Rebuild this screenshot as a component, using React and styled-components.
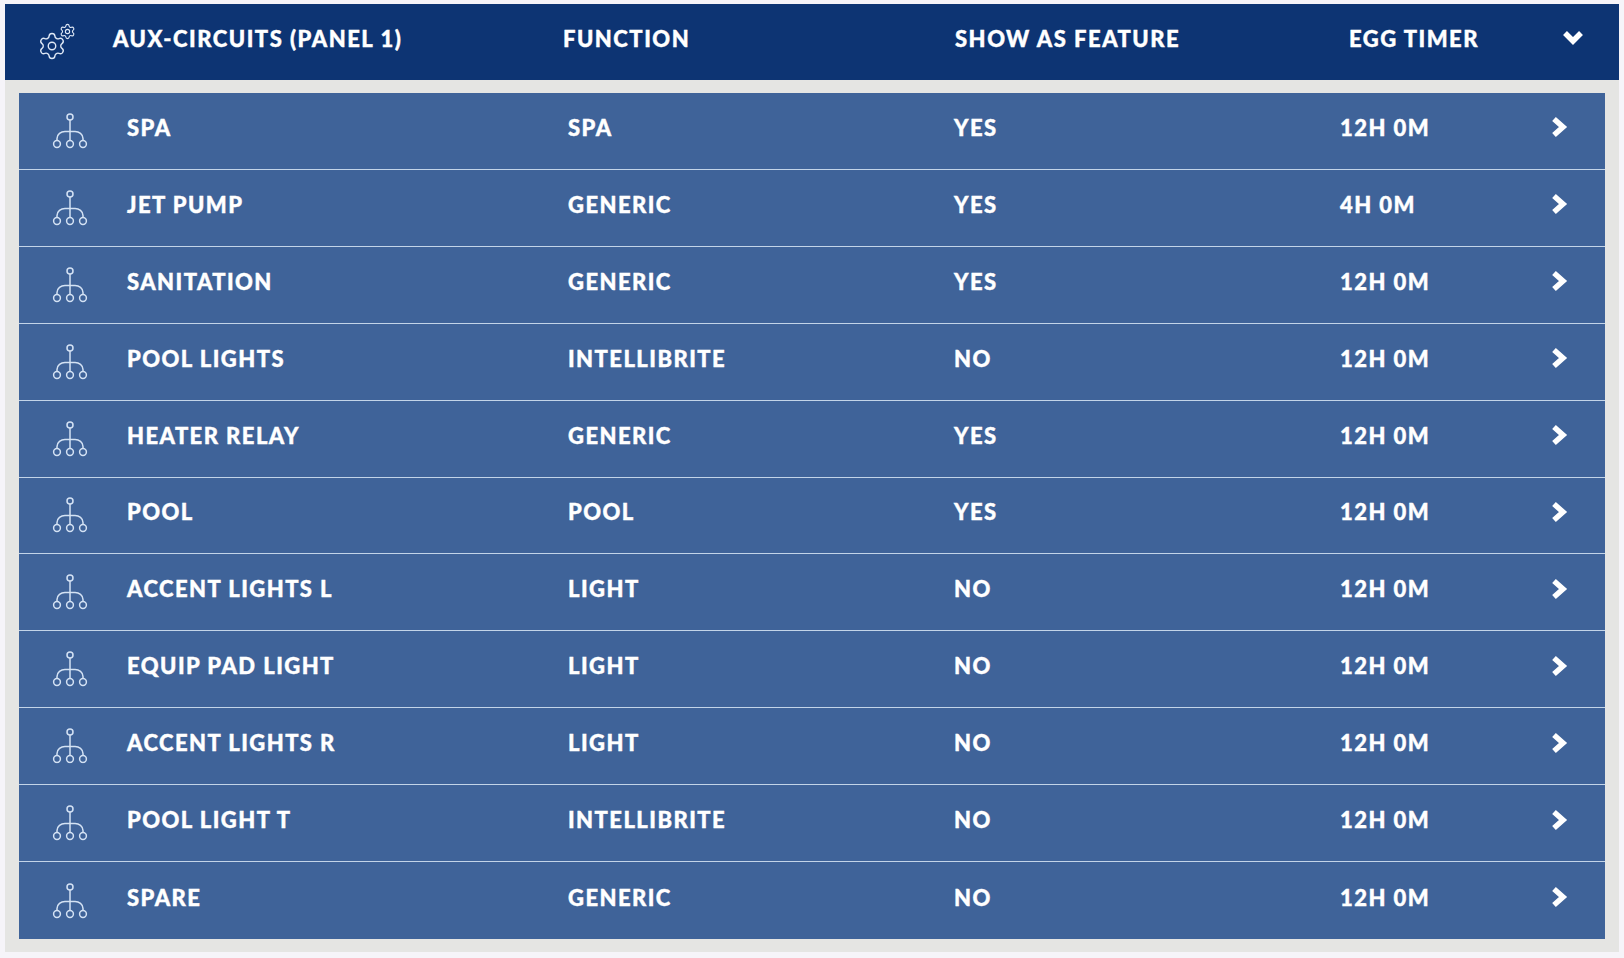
import styled, { createGlobalStyle } from "styled-components";
import { Settings } from "lucide-react";

const GlobalStyle = createGlobalStyle`
  html, body {
    margin: 0;
    padding: 0;
    background: #f6f4f9;
  }
  body {
    font-family: "Lato", "Liberation Sans", sans-serif;
  }
`;

const Page = styled.div`
  width: 1624px;
  height: 958px;
  padding: 4px 5px 6px;
  box-sizing: border-box;
  overflow: hidden;
`;

const Panel = styled.section`
  height: 948px;
  display: flex;
  flex-direction: column;
  background: #e5e5e3;
`;

const Header = styled.header`
  height: 76px;
  flex: none;
  display: grid;
  grid-template-columns: 108px 450px 392px 394px 180px 1fr;
  align-items: center;
  box-sizing: border-box;
  background: #0d3473;
`;

const HeaderCell = styled.div`
  color: #fff;
  font-size: 22px;
  font-weight: 900;
  letter-spacing: 1.5px;
  line-height: 1;
  white-space: nowrap;
  padding-bottom: 6px;
  -webkit-text-stroke: 0.4px #fff;
`;

const GearIcon = styled.div`
  position: relative;
  width: 36px;
  height: 34px;
  margin: 0 0 0 34px;
  color: #dfe8f5;

  svg {
    position: absolute;
  }
  svg:first-child {
    left: -2px;
    bottom: -2px;
  }
  svg:last-child {
    right: -1px;
    top: -2px;
  }
`;

const HeaderChevron = styled.svg`
  width: 22px;
  height: 16px;
  display: block;
  justify-self: end;
  margin-right: 35px;
  margin-bottom: 8px;
`;

const List = styled.div`
  margin: 13px 14px 0;
  height: 846px;
  display: grid;
  grid-auto-rows: 1fr;
`;

const Row = styled.div`
  display: grid;
  grid-template-columns: 108px 441px 386px 386px 180px 1fr;
  align-items: center;
  background: #3f6399;
  box-sizing: border-box;
  border-bottom: 1px solid #c3d4e8;

  &:last-child {
    border-bottom: 0;
  }
`;

const Cell = styled.div`
  color: #fff;
  font-size: 22px;
  font-weight: 900;
  letter-spacing: 1.45px;
  line-height: 1;
  white-space: nowrap;
  padding-bottom: 6px;
  -webkit-text-stroke: 0.4px #fff;
`;

const NodeIcon = styled.svg`
  width: 36px;
  height: 36px;
  display: block;
  margin-left: 33px;
  fill: none;
  stroke: #d4e2f4;
  stroke-width: 1.5;
`;

const RowChevron = styled.svg`
  width: 18px;
  height: 22px;
  display: block;
  justify-self: end;
  margin-right: 36px;
  margin-bottom: 7px;
`;

const circuits = [
  ["SPA", "SPA", "YES", "12H 0M"],
  ["JET PUMP", "GENERIC", "YES", "4H 0M"],
  ["SANITATION", "GENERIC", "YES", "12H 0M"],
  ["POOL LIGHTS", "INTELLIBRITE", "NO", "12H 0M"],
  ["HEATER RELAY", "GENERIC", "YES", "12H 0M"],
  ["POOL", "POOL", "YES", "12H 0M"],
  ["ACCENT LIGHTS L", "LIGHT", "NO", "12H 0M"],
  ["EQUIP PAD LIGHT", "LIGHT", "NO", "12H 0M"],
  ["ACCENT LIGHTS R", "LIGHT", "NO", "12H 0M"],
  ["POOL LIGHT T", "INTELLIBRITE", "NO", "12H 0M"],
  ["SPARE", "GENERIC", "NO", "12H 0M"],
];

const CircuitIcon = () => (
  <NodeIcon viewBox="0 0 36 36">
    <circle cx="18" cy="4" r="3" />
    <circle cx="5" cy="31" r="3.4" />
    <circle cx="18" cy="31" r="3.4" />
    <circle cx="31" cy="31" r="3.4" />
    <path d="M18 7V27.5" />
    <path d="M5 27.5V25.5C5 21 9 18.5 13 18.5H23C27 18.5 31 21 31 25.5V27.5" />
  </NodeIcon>
);

const App = () => {
  return (
    <>
      <GlobalStyle />
      <Page>
        <Panel>
          <Header>
            <GearIcon>
              <Settings size={30} strokeWidth={1.1} />
              <Settings size={17} strokeWidth={1.6} />
            </GearIcon>
            <HeaderCell>AUX-CIRCUITS (PANEL 1)</HeaderCell>
            <HeaderCell>FUNCTION</HeaderCell>
            <HeaderCell>SHOW AS FEATURE</HeaderCell>
            <HeaderCell>EGG TIMER</HeaderCell>
            <HeaderChevron viewBox="0 0 22 16">
              <polyline points="3,3 11,11 19,3" fill="none" stroke="#fff" strokeWidth="5.5" />
            </HeaderChevron>
          </Header>
          <List>
            {circuits.map((c) => (
              <Row key={c[0]}>
                <CircuitIcon />
                <Cell>{c[0]}</Cell>
                <Cell>{c[1]}</Cell>
                <Cell>{c[2]}</Cell>
                <Cell>{c[3]}</Cell>
                <RowChevron viewBox="0 0 18 22">
                  <polyline points="3,3 12,11 3,19" fill="none" stroke="#fff" strokeWidth="5.5" />
                </RowChevron>
              </Row>
            ))}
          </List>
        </Panel>
      </Page>
    </>
  );
};

export default App;
